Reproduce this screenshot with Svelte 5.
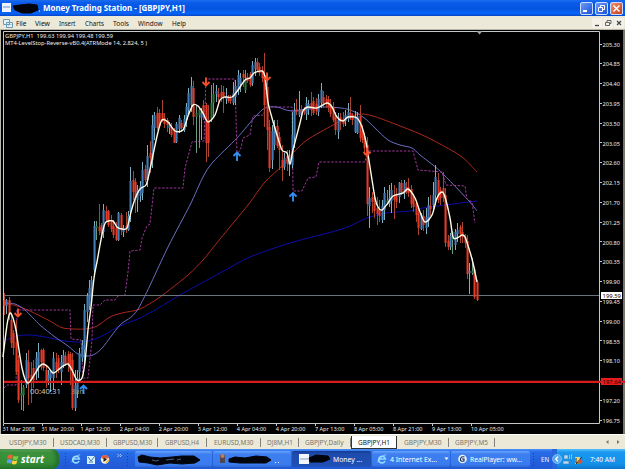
<script lang="ts">
  const menus = [
    { label: 'File', w: 10.5, gap: 8.5 },
    { label: 'View', w: 15, gap: 9 },
    { label: 'Insert', w: 16.5, gap: 9 },
    { label: 'Charts', w: 19, gap: 9.5 },
    { label: 'Tools', w: 16, gap: 9 },
    { label: 'Window', w: 24.5, gap: 9 },
    { label: 'Help', w: 14, gap: 0 }
  ];

  const tabs = [
    { label: 'USDJPY,M30', w: 52, text: 37.5 },
    { label: 'USDCAD,M30', w: 53, text: 40 },
    { label: 'GBPUSD,M30', w: 51, text: 39 },
    { label: 'GBPUSD,H4', w: 49, text: 34 },
    { label: 'EURUSD,M30', w: 54, text: 39.5 },
    { label: 'DJ8M,H1', w: 38, text: 26 },
    { label: 'GBPJPY,Daily', w: 52, text: 38.5 },
    { label: 'GBPJPY,H1', w: 46, text: 32, active: true },
    { label: 'GBPJPY,M30', w: 52, text: 37.5 },
    { label: 'GBPJPY,M5', w: 46, text: 33 }
  ];

  const prices = Array.from({ length: 20 }, (_, n) => ({ text: (205.3 - n * 0.45).toFixed(2), y: 44.5 + n * 19.79 })).filter(
    (p) => p.text !== '197.65'
  );

  const times = [
    '31 Mar 2008', '31 Mar 20:00', '1 Apr 12:00', '2 Apr 04:00', '2 Apr 20:00', '3 Apr 12:00', '4 Apr 04:00',
    '4 Apr 20:00', '7 Apr 13:00', '8 Apr 05:00', '8 Apr 21:00', '9 Apr 13:00', '10 Apr 05:00'
  ];

  // x, high, low, body top, body bottom, direction (r = down, b = up, g = flat)
  const candles = `4 293 315 300 306 r|6 299 314 300 306 b|9 297 320 300 315 r|11 315 348 320 343 r|13 330 355 333 348 r
16 320 375 342 372 r|18 355 403 360 400 r|21 380 410 393 396 g|23 385 411 387 395 g|26 353 388 360 385 b|28 350 405 362 378 r
31 362 403 375 380 r|33 360 388 368 380 r|36 352 380 358 372 b|38 343 378 352 365 b|41 349 370 350 362 r|43 348 371 350 368 r
46 365 388 370 382 r|48 370 385 375 380 b|50 370 392 371 378 b|53 352 390 358 378 b|56 353 378 362 370 r|58 355 373 358 370 r
61 355 385 362 372 b|63 350 368 355 366 b|65 352 366 356 364 r|68 351 372 354 364 r|70 352 385 354 370 r|72 353 410 360 408 r
75 370 411 385 408 b|77 370 398 378 392 b|79 348 382 353 372 b|82 340 362 345 358 b|84 304 365 310 350 b|87 293 322 296 312 b
89 280 310 288 306 b|91 276 300 280 297 b|94 221 275 226 270 b|96 221 240 226 228 g|99 204 235 227 231 r|101 223 237 225 233 r
103 204 238 210 232 b|106 206 222 211 220 r|108 210 227 211 225 r|111 215 232 220 229 r|113 220 238 226 235 r|116 222 241 228 240 r
118 212 241 213 240 b|121 213 235 215 230 r|123 225 237 228 232 b|126 212 233 226 229 r|128 211 231 216 230 b|130 167 222 181 212 b
133 171 200 180 192 r|135 178 213 182 198 r|137 185 212 190 200 b|140 181 202 186 196 b|142 162 200 170 193 b|145 165 182 169 180 r
147 145 187 156 180 b|150 141 173 153 158 r|152 115 168 125 160 b|154 112 140 115 128 b|157 107 130 113 128 r|159 109 128 113 126 r
162 100 122 113 121 r|164 113 128 118 124 r|167 118 132 120 125 r|169 122 134 125 128 b|171 123 137 127 135 r|174 128 143 130 143 r
176 122 143 124 142 b|179 115 133 118 129 b|181 120 132 123 128 r|184 115 132 119 130 b|186 103 127 107 120 b|188 88 115 93 110 b
191 77 112 86 105 b|193 81 125 88 117 r|196 105 153 113 117 g|199 107 148 110 115 g|201 108 140 113 118 b|203 100 120 105 114 r
206 103 162 105 143 r|208 105 157 120 143 r|211 85 122 103 119 g|213 83 117 94 103 g|216 85 102 91 94 b|218 88 106 94 97 r
221 85 102 92 98 r|223 86 113 92 97 r|226 88 104 96 99 b|228 95 103 97 101 r|230 95 104 98 101 r|233 82 105 93 103 b
235 80 105 86 97 b|238 70 95 75 90 b|240 73 92 78 84 b|243 70 87 74 78 r|245 70 93 80 90 g|247 73 83 77 81 r
250 72 87 74 85 r|252 61 86 65 83 b|255 58 76 62 69 b|257 58 72 62 70 r|259 63 76 67 73 r|262 66 82 70 78 r
264 53 127 75 105 r|267 75 150 87 130 r|269 120 172 127 168 r|272 125 169 131 160 b|274 120 150 126 145 b|277 120 148 126 146 r
279 132 170 137 150 r|282 145 181 160 168 r|284 153 170 158 167 b|287 150 171 156 164 r|289 150 176 157 165 b|292 112 168 135 165 b
294 103 148 110 137 b|296 99 115 109 112 r|299 91 117 110 115 b|301 105 119 110 113 r|304 107 115 109 111 r|306 97 120 103 114 b
308 100 115 104 110 b|311 92 116 103 110 r|313 97 115 101 113 r|316 98 115 104 111 r|318 94 116 99 112 b|321 83 108 90 103 b
323 91 108 97 104 r|326 95 108 99 104 r|328 96 112 99 107 r|330 99 117 104 114 r|333 102 122 107 120 r|335 112 135 117 130 r
338 113 139 120 132 b|340 113 130 117 121 r|343 112 127 119 124 r|345 110 126 115 121 b|348 103 122 112 119 b|350 97 120 113 118 r
352 113 125 115 120 r|355 111 133 118 132 b|357 112 134 116 133 b|360 105 142 116 138 r|362 125 143 130 140 r|364 133 155 136 148 r
367 137 216 145 204 r|369 187 228 198 206 b|372 192 213 197 202 r|374 192 218 203 211 r|377 197 225 208 214 r|379 200 222 209 216 r
382 200 223 206 220 b|384 187 220 193 210 b|387 190 205 200 203 g|389 185 207 198 204 b|391 183 213 190 201 b|394 185 219 196 200 r
396 188 208 194 202 r|399 182 203 183 197 b|401 180 195 183 192 r|404 180 199 183 193 b|406 182 194 187 192 r|408 178 197 187 193 r
411 185 208 189 204 r|413 194 212 197 207 r|416 201 222 203 215 r|418 208 235 213 228 r|421 213 230 215 229 b|423 210 231 216 225 r
426 208 234 217 228 b|428 197 227 205 221 b|430 195 216 206 209 r|433 182 212 195 205 b|435 165 205 177 195 b|438 173 203 180 200 r
440 187 205 190 198 r|443 172 202 188 198 r|445 188 247 195 243 r|448 235 250 241 247 r|450 233 250 236 247 b|452 231 254 232 240 g
455 229 250 232 245 b|457 223 242 230 234 b|460 225 243 227 234 r|462 222 243 232 237 r|465 234 248 237 243 r|467 235 279 241 274 r
469 263 294 271 273 b|472 258 275 271 273 g|474 267 299 269 297 r|477 280 301 282 300 r`
    .split(/[|\n]/)
    .map((row) => {
      const [x, high, low, top, bottom, dir] = row.trim().split(' ');
      return { x: +x, high: +high, low: +low, top: +top, bottom: +bottom, dir };
    });

  const fastMa =
    '3,357 7,325 10,313 13,318 16,330 19,350 22,368 25,379 28,383 31,380 36,372 39,367 43,364 48,367 53,373 58,370 63,366 68,364 72,370 77,380 82,378 85,362 88,330 91,307 94,278 97,262 100,245 103,230 106,222 113,221 117,227 122,229 127,228 131,212 135,199 140,189 146,185 149,174 153,155 158,132 162,120 168,122 175,131 183,130 188,116 193,105 198,106 203,113 208,122 215,115 220,100 225,97 232,97 238,90 245,80 250,78 254,73 262,71 265,77 268,102 272,118 277,135 282,150 287,153 290,164 293,150 300,123 303,111 308,107 317,108 327,103 332,107 337,117 343,121 348,117 357,118 362,127 366,142 370,167 375,198 378,207 382,210 388,203 393,196 403,193 408,189 415,198 420,212 425,222 432,215 437,198 442,192 445,197 450,218 453,237 457,238 462,235 465,237 470,252 473,263 477,282';
  const violetMa =
    '4,303 15,304 25,310 40,325 55,337 68,346 78,354 88,356 95,354 103,347 120,325 138,309 168,247 190,205 203,177 213,162 237,138 255,117 265,108 277,107 292,111 320,107 347,109 363,117 375,128 388,140 400,145 412,148 420,155 440,171 468,200 477,211';
  const redMa =
    '4,303 17,306 30,311 50,321 63,328 85,329 97,326 110,317 122,313 140,309 160,297 188,275 203,260 220,239 248,205 265,182 282,166 293,153 307,140 333,125 347,118 360,114 373,116 395,124 420,134 440,144 462,157 477,172';
  const blueMa =
    '4,341 17,336 30,335 45,337 65,341 83,342 100,337 120,326 140,318 160,307 180,295 220,273 250,257 290,243 342,229 367,218 387,213 410,211 423,208 477,201';
  const stopLine =
    '4,388 7,385 16,385 17,310 70,310 71,339 81,340 83,378 88,378 92,340 93,305 100,305 105,300 115,300 118,296 125,295 128,272 130,251 140,250 142,238 147,226 150,224 154,188 183,188 185,168 192,142 204,141 206,79 235,79 237,155 241,148 243,138 250,135 253,116 264,115 266,77 268,107 292,107 293,191 302,191 308,178 316,177 319,162 365,162 367,151 413,151 418,170 442,172 446,185 465,186 467,199 472,202 475,223';

  // Catmull-Rom spline through the points
  function smooth(points: string) {
    const p = points.split(' ').map((s) => s.split(',').map(Number));
    let d = `M${p[0][0]} ${p[0][1]}`;
    for (let i = 0; i < p.length - 1; i++) {
      const a = p[Math.max(0, i - 1)];
      const b = p[i];
      const c = p[i + 1];
      const e = p[Math.min(p.length - 1, i + 2)];
      d += `C${b[0] + (c[0] - a[0]) / 7} ${b[1] + (c[1] - a[1]) / 7} ${c[0] - (e[0] - b[0]) / 7} ${c[1] - (e[1] - b[1]) / 7} ${c[0]} ${c[1]}`;
    }
    return d;
  }

  const arrows = [
    { x: 18, y: 313, up: false },
    { x: 206, y: 82, up: false },
    { x: 267, y: 77, up: false },
    { x: 367, y: 152, up: false },
    { x: 83.5, y: 389, up: true },
    { x: 237, y: 156, up: true },
    { x: 293, y: 196.5, up: true }
  ];
</script>

{#snippet label(text: string, w: number, h = 12)}
  <svg class="label" width={w} height={h}>
    <text x="0" y={h / 2 + 2.6} textLength={w} lengthAdjust="spacingAndGlyphs">{text}</text>
  </svg>
{/snippet}

{#snippet ie(size: number)}
  <svg width={size} height={size} viewBox="0 0 12 12">
    <path d="M9.7 8.4A4 4 0 1 1 10 6H3" fill="none" stroke="#8fd8ff" stroke-width="2" />
    <path d="M1 10C1 7 7 1 11 1" fill="none" stroke="#bfeaff" stroke-width=".9" />
  </svg>
{/snippet}

<main>
  <header class="titlebar">
    <svg class="logo" width="42" height="16">
      <path d="M2 3h9v9H2z" fill="#eef4ff" />
      <path d="M3 7h7" stroke="#6d8fc8" />
      <path d="M13 6l7-1 9-1 8 1 1 5-7 3-9 0-7-3z" fill="#02030a" stroke="#02030a" />
      <path d="M39 11h1" stroke="#fff" />
    </svg>
    <div class="caption">{@render label('Money Trading Station - [GBPJPY,H1]', 142, 14)}</div>
    <div class="buttons">
      <span><svg width="11" height="11"><path d="M2 8h4" stroke="#fff" stroke-width="2" /></svg></span>
      <span>
        <svg width="11" height="11"><path d="M4.5 4V2.5h4v4H7M2.5 4.5h4v4h-4z" fill="none" stroke="#fff" /></svg>
      </span>
      <span class="close">
        <svg width="11" height="11"><path d="M2.500 2.500l6 6M8.500 2.500l-6 6" stroke="#fff" stroke-width="1.500" /></svg>
      </span>
    </div>
  </header>

  <nav class="menubar">
    <svg width="10" height="10">
      <path d="M.5 1.500h6v5h-6zM3.500 4.500h6v5h-6z" fill="#e4f2f8" stroke="#6a9cba" />
      <path d="M5 8l1.500-2 1 1 1-1" fill="none" stroke="#6a9cba" stroke-width=".7" />
    </svg>
    <div class="menus">
      {#each menus as menu}
        <span style:width="{menu.w + menu.gap}px">{@render label(menu.label, menu.w)}</span>
      {/each}
    </div>
    <div class="doc-buttons">
      <span><svg width="8" height="8"><path d="M2 6.500h4" stroke="#444" stroke-width="1.300" /></svg></span>
      <span><svg width="8" height="8"><path d="M3 3V1.500h4v3H5.500M1.500 3.500h4v3h-4z" fill="none" stroke="#555" stroke-width=".9" /></svg></span>
      <span><svg width="8" height="8"><path d="M2 2l4 4M6 2l-4 4" stroke="#444" stroke-width="1.200" /></svg></span>
    </div>
  </nav>

  <section class="chart">
    <svg width="625" height="405" viewBox="0 29 625 405">
      <rect x="0" y="29" width="625" height="405" fill="#000" />
      <path d="M0 29.500h625M.5 29v405" stroke="#b8b6a8" />
      <path d="M624 30v404" stroke="#77756c" stroke-width="2" />
      <path d="M3.500 423.500V31.500H599.500V423.500Z" fill="none" stroke="#c4c8c8" />
      <path d="M476.500 31h6l-3 3.500z" fill="#9aa6ae" />

      <path class="ma" d={smooth(blueMa)} stroke="#0d0daa" />
      <path class="ma" d={smooth(redMa)} stroke="#ad281d" />
      <path class="ma" d={smooth(violetMa)} stroke="#6a6fc6" />
      <polyline class="stop" points={stopLine} />
      <path d="M4 295.500H599" stroke="#6b747b" />

      {#each candles as c}
        <g class={c.dir}>
          <path class="wick" d="M{c.x + 0.5} {c.high}V{c.low}" />
          <rect x={c.x - 0.5} y={c.top} width="2.1" height={Math.max(1, c.bottom - c.top)} />
        </g>
      {/each}

      <path d="M4 381.800H625" stroke="#d51d1d" stroke-width="2.200" />
      <path class="ma fast" d={smooth(fastMa)} stroke="#fffbe6" />

      {#each arrows as a}
        <path
          d={a.up ? 'M0 5V-3M-3.500 0L0-3.500L3.500 0' : 'M0-4.500V3M-3.500 0L0 3.500L3.500 0'}
          transform="translate({a.x} {a.y})"
          fill="none"
          stroke={a.up ? '#2f8ff0' : '#f4502a'}
          stroke-width="1.900"
        />
      {/each}

      <text class="timer" x="30" y="394" textLength="31" lengthAdjust="spacingAndGlyphs">00:40:31</text>
      <text class="timer dim" x="71" y="394" textLength="13" lengthAdjust="spacingAndGlyphs">3an</text>

      <text x="5" y="38.200" textLength="108" lengthAdjust="spacingAndGlyphs">GBPJPY,H1&nbsp; 199.63 199.94 199.48 199.59</text>
      <text x="5" y="44.800" textLength="142" lengthAdjust="spacingAndGlyphs">MT4-LevelStop-Reverse-vB0.4(ATRMode 14, 2.824, 5 )</text>

      <rect x="601" y="292" width="21" height="7" fill="#fff" />
      <text class="dark" x="602.500" y="297.500" textLength="18.500" lengthAdjust="spacingAndGlyphs">199.59</text>
      <rect x="601" y="378" width="21" height="7" fill="#e81c1c" />
      <text class="dark" x="602.500" y="383.900" textLength="18.500" lengthAdjust="spacingAndGlyphs">197.64</text>

      {#each prices as p}
        <path d="M600 {Math.round(p.y) - 0.5}h2" stroke="#c4c8c8" />
        <text x="602.500" y={p.y + 2.2} textLength="17.500" lengthAdjust="spacingAndGlyphs">{p.text}</text>
      {/each}

      {#each times as t, i}
        <path d="M{3.5 + i * 39} 424v2" stroke="#c4c8c8" />
        <text x={2.5 + i * 39.05} y="431.300" textLength={i < 2 || i === 12 ? 32.5 : 29.5} lengthAdjust="spacingAndGlyphs">{t}</text>
      {/each}
    </svg>
  </section>

  <div class="tabs">
    {#each tabs as tab}
      <div class="tab" class:active={tab.active} style:width="{tab.w}px">
        {@render label(tab.label, tab.text)}
      </div>
    {/each}
    <svg class="scroll" width="22" height="10">
      <path d="M5.500 3v4L3 5zM14 3v4l2.500-2z" fill="#77766c" />
    </svg>
  </div>

  <footer class="taskbar">
    <div class="start">
      <svg width="12" height="13" viewBox="0 0 12 13">
        <path d="M1 2.500Q3.500 1 6 2.500L5 6Q3 5 0 6z" fill="#f0603a" />
        <path d="M6.700 2.800Q9 4 11.500 2.800L10.500 6.500Q8 7.500 5.700 6.300z" fill="#7cd043" />
        <path d="M0 7Q3 5.700 5 7L4 10.500Q2 9.500-1 10.500z" fill="#5aa0f2" />
        <path d="M5.500 7.300Q8 8.500 10.300 7.300L9.300 11Q7 12 4.600 10.800z" fill="#fbd23e" />
      </svg>
      <svg class="label" width="24" height="15"><text x="0" y="11" textLength="23" lengthAdjust="spacingAndGlyphs">start</text></svg>
    </div>
    <div class="quick">
      <i class="grip"></i>
      {@render ie(10)}
      <svg width="10" height="11"><path d="M1 2h8v8H1z" fill="#d9efff" /><path d="M2 3l3 4 4-5M3 8h4" fill="none" stroke="#3279bd" /></svg>
      <svg width="10" height="11">
        <circle cx="5" cy="5.500" r="4.200" fill="#f4f0df" />
        <path d="M1 4a4.200 4.200 0 0 1 8 0L5 5z" fill="#df6040" />
        <path d="M3.500 3.500l3.500 2-3.500 2.500z" fill="#222" />
        <path d="M6 9l3-3" stroke="#f3b42f" stroke-width="1.500" />
      </svg>
      <svg class="more" width="5" height="6"><path d="M.5 1l1.500 1.500L.5 4M3 1l1.500 1.500L3 4" fill="none" stroke="#cfe2ff" stroke-width=".8" /></svg>
      <i class="grip"></i>
    </div>
    <div class="task t1">
      <svg width="68" height="14">
        <path d="M3 5l4-2 8 2 10 1 12-1 10-1 12 0 6 4-5 3-13 1-12-1-13 2-9-2-9-1z" fill="#02040c" stroke="#02040c" />
        <path d="M17 8l4 1 3-1M31 8l8-1M42 8l4-1" stroke="#7d9ad0" fill="none" stroke-width=".6" />
      </svg>
    </div>
    <div class="task t2">
      <svg width="64" height="14">
        <path d="M2 3h5v8H2z" fill="#4f4652" /><circle cx="4.500" cy="4" r="2" fill="#b97d64" />
        <path d="M11 7l6-2 10 1 11-2 11 1 4 3-5 3-14 0-12 0-11-1z" fill="#02040c" stroke="#02040c" />
        <path d="M57 10.500h1M60 10.500h1" stroke="#fff" />
      </svg>
    </div>
    <div class="task t3 pressed">
      <svg width="32" height="14">
        <path d="M0 2h10v10H0z" fill="#f2f5fb" /><path d="M1 7h8" stroke="#8b9ecb" />
        <path d="M10 6l7-3 12 1 2 3-7 3-13 0z" fill="#02040c" stroke="#02040c" />
      </svg>
      {@render label('Money ...', 29)}
    </div>
    <div class="task t4">
      {@render ie(10)}
      {@render label('4 Internet Ex...', 47)}
      <svg width="5" height="4"><path d="M.5 .5h4L2.500 3z" fill="#fff" /></svg>
    </div>
    <div class="task t5">
      <svg width="9" height="10"><circle cx="4.500" cy="5" r="4.300" fill="#e9f1fb" /><path d="M6.500 3Q3 2 2.500 5T6 7V5H4" fill="none" stroke="#15305f" stroke-width="1.200" /></svg>
      {@render label('RealPlayer: ww...', 52)}
    </div>
    <i class="grip tray-grip"></i>
    <div class="lang">{@render label('EN', 8)}</div>
    <div class="tray">
      <svg class="chevron" width="10" height="12"><circle cx="5" cy="6" r="4.500" fill="#54a9f3" stroke="#a5d5fb" stroke-width=".6" /><path d="M6 3.500L3.800 6 6 8.500" fill="none" stroke="#fff" stroke-width="1.300" /></svg>
      <svg width="22" height="13">
        <path d="M2 2h4v4H2zM1 8h6v3H1z" fill="#b8dcf5" stroke="#4379b0" stroke-width=".6" />
        <path d="M7.500 2v4M9.500 1v5" stroke="#79df70" />
        <path d="M13 4h5v7h-5z" fill="#e8d27e" /><path d="M14 11l6-7M14 5v5h4" stroke="#3b301e" fill="none" />
        <circle cx="18.500" cy="8.500" r="2" fill="#d85335" />
      </svg>
      {@render label('7:40 AM', 25)}
    </div>
  </footer>
</main>

<style>
  :global(body) {
    margin: 0;
    background: #000;
  }

  main {
    width: 625px;
    height: 469px;
    overflow: hidden;
    display: flex;
    flex-direction: column;
    font-family: 'Noto Sans', 'Open Sans', sans-serif;
  }

  svg {
    display: block;
    flex: none;
  }

  text {
    font-size: 6px;
    fill: #ededed;
  }

  .label {
    overflow: visible;
  }

  .titlebar {
    height: 16px;
    display: flex;
    align-items: center;
    background: linear-gradient(#1c6cf0 0, #0a5bea 18%, #0554e0 55%, #0765fb 82%, #0447c8 100%);
  }

  .caption .label text {
    font-size: 8.5px;
    font-weight: 700;
    fill: #fff;
  }

  .caption {
    margin-left: 1px;
  }

  .buttons {
    margin-left: auto;
    margin-right: 2px;
    display: flex;
    gap: 2px;
  }

  .buttons span {
    width: 11px;
    height: 11px;
    border: 1px solid #c9dcff;
    border-radius: 2px;
    background: linear-gradient(135deg, #6c9cf5, #1f51d5);
  }

  .buttons .close {
    background: linear-gradient(135deg, #f09272, #c93813);
  }

  .menubar {
    height: 13px;
    display: flex;
    align-items: center;
    padding: 0 1px 0 3px;
    background: #ece9d8;
  }

  .menus {
    display: flex;
    margin-left: 3px;
  }

  .menus .label text {
    font-size: 7.5px;
    fill: #111;
  }

  .doc-buttons {
    margin-left: auto;
    display: flex;
    gap: 1px;
  }

  .doc-buttons span {
    padding: 1px;
    background: #f4f2e8;
  }

  .chart {
    height: 405px;
  }

  .ma {
    fill: none;
    stroke-width: 1;
  }

  .fast {
    stroke-width: 1.4;
  }

  .stop {
    fill: none;
    stroke: #9b3999;
    stroke-dasharray: 2.4 1.5;
  }

  .wick {
    stroke-width: 1;
  }

  .r .wick {
    stroke: #a8442f;
  }
  .r rect {
    fill: #e23b27;
  }
  .b .wick {
    stroke: #7fb0bd;
  }
  .b rect {
    fill: #447db5;
  }
  .g .wick {
    stroke: #6d9a84;
  }
  .g rect {
    fill: #28743a;
  }

  .timer {
    font-size: 7.5px;
    fill: #c6c6c6;
  }

  .dim {
    fill: #87938b;
  }

  .dark {
    fill: #160000;
  }

  .tabs {
    height: 15px;
    box-sizing: border-box;
    border-top: 1px solid #fffef8;
    display: flex;
    align-items: center;
    padding-left: 2px;
    background: #ece9d8;
  }

  .tab {
    height: 9px;
    box-sizing: border-box;
    display: flex;
    justify-content: center;
    align-items: center;
    border-right: 1px solid #86847a;
  }

  .tab .label text {
    font-size: 6.8px;
    fill: #77756b;
  }

  .tab.active {
    height: 13px;
    background: #fff;
    border: 1px solid #333;
    border-top: 0;
  }

  .tab.active .label text {
    fill: #111;
  }

  .scroll {
    margin-left: auto;
  }

  .taskbar {
    height: 20px;
    display: flex;
    align-items: center;
    background: linear-gradient(#4b91f8 0, #286de8 14%, #245edb 65%, #2259d4 100%);
  }

  .start {
    width: 59px;
    height: 20px;
    box-sizing: border-box;
    display: flex;
    align-items: center;
    gap: 2px;
    padding-left: 7px;
    border-radius: 0 7px 7px 0;
    background: linear-gradient(#71b46f 0, #3c943c 18%, #348e35 70%, #26762b 100%);
    box-shadow: inset -3px 0 4px #226d2d;
  }

  .start .label text {
    font-size: 10.5px;
    font-weight: 700;
    font-style: italic;
    fill: #fff;
  }

  .quick {
    width: 76px;
    display: flex;
    align-items: center;
    gap: 4.3px;
    padding-left: 5px;
    box-sizing: border-box;
  }

  .quick .more {
    margin: -6px 0 0 3px;
  }

  .grip {
    width: 3px;
    height: 14px;
    flex: none;
    background: radial-gradient(circle, #133f9f 0.7px, transparent 1px) 0 0 / 3px 3px;
  }

  .task {
    height: 16px;
    box-sizing: border-box;
    flex: none;
    display: flex;
    align-items: center;
    gap: 2px;
    margin-right: 1px;
    border-radius: 2px;
    background: linear-gradient(#69a1fb, #3e7ff0 20%, #397bee 85%, #2e67d4);
  }

  .task .label text,
  .lang text,
  .tray text {
    font-size: 7px;
    fill: #fff;
  }

  .t1 {
    width: 77px;
  }
  .t2 {
    width: 78px;
    padding-left: 5px;
  }
  .t3 {
    width: 79px;
    padding-left: 7px;
  }
  .t4 {
    width: 78px;
    padding-left: 5px;
    gap: 2.5px;
  }
  .t4 > :last-child {
    margin-left: 5px;
  }
  .t5 {
    width: 79px;
    padding-left: 7px;
    gap: 3px;
  }

  .pressed {
    background: linear-gradient(#153c93, #1e4cac 20%, #1f50b8);
  }

  .tray-grip {
    margin-left: 1px;
  }

  .lang {
    margin-left: 6px;
    margin-right: 3px;
  }

  .tray {
    flex: 1;
    height: 20px;
    display: flex;
    align-items: center;
    background: linear-gradient(90deg, #2765df 0, #2765df 5px, transparent 5px),
      linear-gradient(#53c1fa 0, #1a98ee 16%, #1390e9 75%, #0d76ce 100%);
  }

  .tray .label {
    margin-left: 6px;
  }
</style>
